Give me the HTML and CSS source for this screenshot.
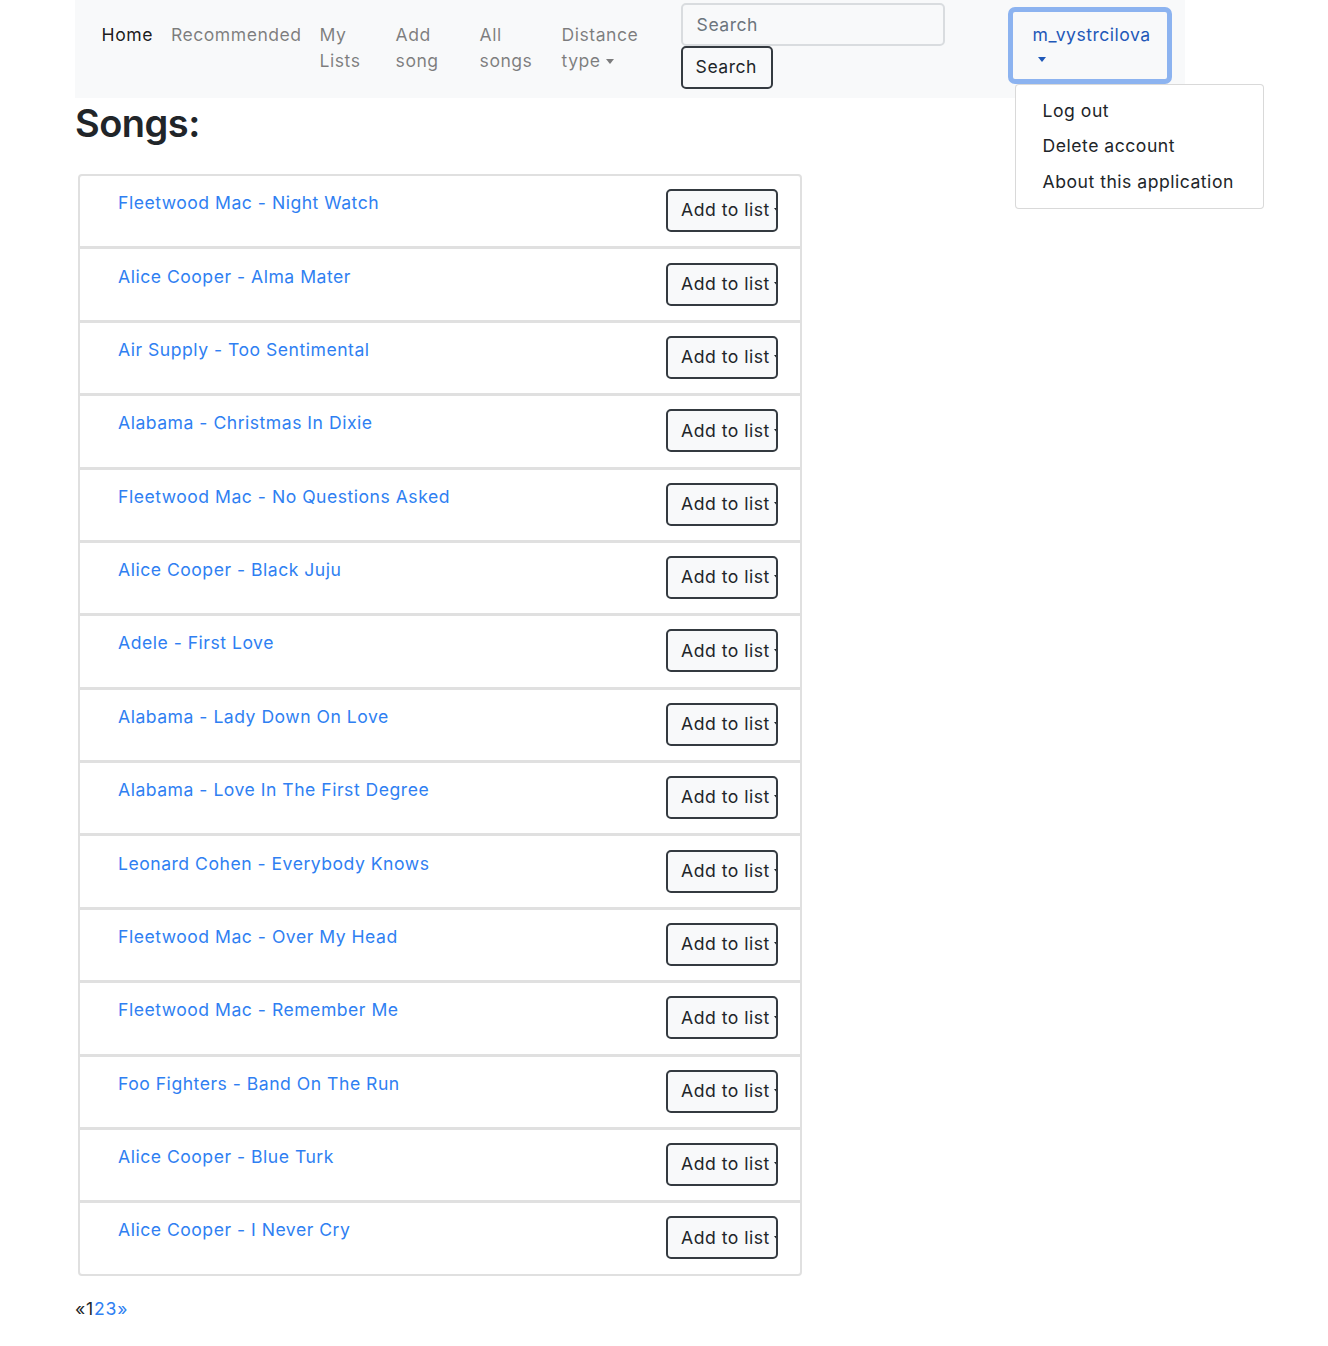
FILE: index.html
```html
<!DOCTYPE html>
<html>
<head>
<meta charset="utf-8">
<link rel="stylesheet" href="styles.css">
</head>
<body>
<div class="page">
  <nav class="navbar">
    <ul class="nav-list">
      <li class="nav-item"><a class="nav-link active" href="#">Home</a></li>
      <li class="nav-item"><a class="nav-link" href="#">Recommended</a></li>
      <li class="nav-item w-lists"><a class="nav-link" href="#">My Lists</a></li>
      <li class="nav-item w-add"><a class="nav-link" href="#">Add song</a></li>
      <li class="nav-item w-all"><a class="nav-link" href="#">All songs</a></li>
      <li class="nav-item w-dist"><a class="nav-link" href="#">Distance type<span class="caret"></span></a></li>
    </ul>
    <form class="search-form">
      <input class="search-input" type="text" placeholder="Search">
      <button class="btn-dark-outline search-btn" type="button">Search</button>
    </form>
    <div class="user">
      <button class="user-btn" type="button">m_vystrcilova<span class="caret caret-blue"></span></button>
      <div class="dropdown-menu">
        <a class="dropdown-item" href="#">Log out</a>
        <a class="dropdown-item" href="#">Delete account</a>
        <a class="dropdown-item" href="#">About this application</a>
      </div>
    </div>
  </nav>

  <h1 class="title">Songs:</h1>

  <ul class="song-list">
    <li class="song"><a class="song-link" href="#">Fleetwood Mac - Night Watch</a><button class="btn-dark-outline add-btn" type="button">Add to list<span class="caret"></span></button></li>
    <li class="song"><a class="song-link" href="#">Alice Cooper - Alma Mater</a><button class="btn-dark-outline add-btn" type="button">Add to list<span class="caret"></span></button></li>
    <li class="song"><a class="song-link" href="#">Air Supply - Too Sentimental</a><button class="btn-dark-outline add-btn" type="button">Add to list<span class="caret"></span></button></li>
    <li class="song"><a class="song-link" href="#">Alabama - Christmas In Dixie</a><button class="btn-dark-outline add-btn" type="button">Add to list<span class="caret"></span></button></li>
    <li class="song"><a class="song-link" href="#">Fleetwood Mac - No Questions Asked</a><button class="btn-dark-outline add-btn" type="button">Add to list<span class="caret"></span></button></li>
    <li class="song"><a class="song-link" href="#">Alice Cooper - Black Juju</a><button class="btn-dark-outline add-btn" type="button">Add to list<span class="caret"></span></button></li>
    <li class="song"><a class="song-link" href="#">Adele - First Love</a><button class="btn-dark-outline add-btn" type="button">Add to list<span class="caret"></span></button></li>
    <li class="song"><a class="song-link" href="#">Alabama - Lady Down On Love</a><button class="btn-dark-outline add-btn" type="button">Add to list<span class="caret"></span></button></li>
    <li class="song"><a class="song-link" href="#">Alabama - Love In The First Degree</a><button class="btn-dark-outline add-btn" type="button">Add to list<span class="caret"></span></button></li>
    <li class="song"><a class="song-link" href="#">Leonard Cohen - Everybody Knows</a><button class="btn-dark-outline add-btn" type="button">Add to list<span class="caret"></span></button></li>
    <li class="song"><a class="song-link" href="#">Fleetwood Mac - Over My Head</a><button class="btn-dark-outline add-btn" type="button">Add to list<span class="caret"></span></button></li>
    <li class="song"><a class="song-link" href="#">Fleetwood Mac - Remember Me</a><button class="btn-dark-outline add-btn" type="button">Add to list<span class="caret"></span></button></li>
    <li class="song"><a class="song-link" href="#">Foo Fighters - Band On The Run</a><button class="btn-dark-outline add-btn" type="button">Add to list<span class="caret"></span></button></li>
    <li class="song"><a class="song-link" href="#">Alice Cooper - Blue Turk</a><button class="btn-dark-outline add-btn" type="button">Add to list<span class="caret"></span></button></li>
    <li class="song"><a class="song-link" href="#">Alice Cooper - I Never Cry</a><button class="btn-dark-outline add-btn" type="button">Add to list<span class="caret"></span></button></li>
  </ul>

  <div class="pagination"><span class="pg-dark">«1</span><a class="pg-link" href="#">2</a><a class="pg-link" href="#">3</a><a class="pg-link" href="#">»</a></div>
</div>
</body>
</html>
```

FILE: styles.css
```css
* { box-sizing: border-box; }

body {
  margin: 0;
  font-family: Inter, "Noto Sans", "Liberation Sans", sans-serif;
  font-size: 17.6px;
  line-height: 26.4px;
  letter-spacing: 0.5px;
  color: #212529;
  background: #fff;
}

a { text-decoration: none; }

.page {
  margin-left: 75px;
  width: 1110px;
}

.navbar {
  position: relative;
  height: 98px;
  background: #f8f9fa;
  display: flex;
  align-items: flex-start;
  padding-left: 17.6px;
}

.nav-list {
  list-style: none;
  margin: 0;
  padding: 0;
  display: flex;
  align-items: flex-start;
  margin-top: 13px;
}

.nav-link {
  display: block;
  padding: 9px 9px;
  color: rgba(0, 0, 0, 0.5);
}

.nav-link.active { color: rgba(0, 0, 0, 0.9); }

.w-lists { width: 76px; }
.w-add { width: 84px; }
.w-all { width: 82px; }
.w-dist { width: 128px; }

.caret {
  display: inline-block;
  width: 0;
  height: 0;
  margin-left: 5px;
  vertical-align: 3px;
  border-top: 5px solid currentColor;
  border-left: 4.5px solid transparent;
  border-right: 4.5px solid transparent;
}

.search-form {
  display: flex;
  flex-direction: column;
  align-items: flex-start;
  margin-top: 3px;
}

.search-input {
  width: 264px;
  height: 43px;
  border: 2px solid #d9dcdf;
  border-radius: 5px;
  background: #f8f9fa;
  padding: 0 14px;
  font: inherit;
  letter-spacing: 0.5px;
  color: #495057;
  outline: none;
}

.search-input::placeholder { color: #6c757d; }

.btn-dark-outline {
  background: #f8f9fa;
  border: 2px solid #343a40;
  border-radius: 5px;
  font: inherit;
  letter-spacing: 0.5px;
  color: #212529;
  cursor: pointer;
}

.search-btn {
  height: 43px;
  width: 92px;
  padding: 0 13px;
  margin-top: 0;
  text-align: left;
}

.user {
  position: relative;
  margin-left: 63px;
  margin-top: 7px;
}

.user-btn {
  display: block;
  width: 164px;
  height: 77px;
  text-align: left;
  padding: 10px 0 17px 20px;
  background: #f8f9fa;
  border: 5px solid #8cb3f0;
  border-radius: 7px;
  font: inherit;
  letter-spacing: 0.5px;
  color: #1f58b8;
  line-height: 26.4px;
}

.user-btn .caret {
  display: block;
  margin: 9px 0 0 5px;
}

.dropdown-menu {
  position: absolute;
  left: 7px;
  top: 77px;
  width: 249px;
  background: #fff;
  border: 1.5px solid rgba(0, 0, 0, 0.15);
  border-radius: 4px;
  padding: 8.8px 0;
  z-index: 10;
}

.dropdown-item {
  display: block;
  padding: 4.4px 27px;
  color: #212529;
  white-space: nowrap;
}

.title {
  margin: 0;
  font-size: 38px;
  font-weight: 600;
  line-height: 50px;
  letter-spacing: -0.5px;
  color: #212529;
}

.song-list {
  list-style: none;
  margin: 26px 0 0 3px;
  padding: 0;
  width: 724px;
  border: 2px solid #e0e0e0;
  border-radius: 4px;
}

.song {
  display: flex;
  align-items: flex-start;
  justify-content: space-between;
  padding: 13.2px 22px 14.2px 38px;
}

.song + .song { border-top: 3px solid #e0e0e0; }

.song-link {
  color: #2f7ff2;
  margin-top: 1px;
}

.add-btn {
  width: 112px;
  height: 43px;
  padding: 0 0 0 13px;
  text-align: left;
  white-space: nowrap;
  overflow: hidden;
}

.add-btn .caret { margin-left: 4px; }

.pagination {
  margin-top: 20px;
  letter-spacing: 0.8px;
}

.pg-dark { color: #212529; }
.pg-link { color: #2f7ff2; }
```
